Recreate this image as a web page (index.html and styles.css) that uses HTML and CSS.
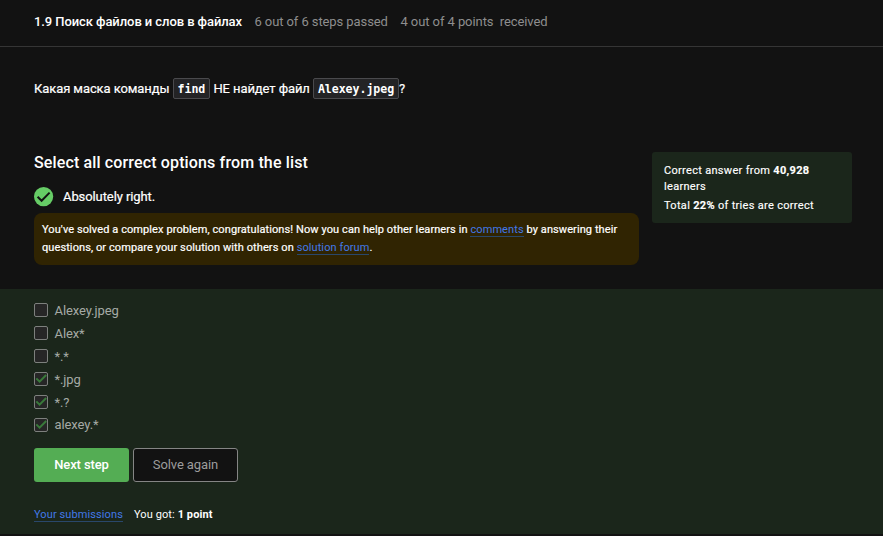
FILE: index.html
```html
<!DOCTYPE html>
<html lang="ru">
<head>
<meta charset="utf-8">
<title>1.9 Поиск файлов и слов в файлах</title>
<link rel="stylesheet" href="styles.css">
</head>
<body>
<header class="topbar"><span class="lesson">1.9 Поиск файлов и слов в файлах</span><span class="steps">6 out of 6 steps passed</span><span class="points">4 out of 4 points &nbsp;received</span></header>
<main>
<p class="question">Какая маска команды <code>find</code> НЕ найдет файл <code>Alexey.jpeg</code>?</p>
<section class="attempt">
<div class="result">
<h2>Select all correct options from the list</h2>
<div class="status"><svg width="20" height="20" viewBox="0 0 20 20"><circle cx="9.6" cy="9.6" r="9.6" fill="#66cc66"/><path d="M3.6 9.8l4 4L15.6 5.6" fill="none" stroke="#121212" stroke-width="2"/></svg><span>Absolutely right.</span></div>
<div class="notice"><span class="line first">You've solved a complex problem, congratulations! Now you can help other learners in <a>comments</a> by answering their</span><span class="line second">questions, or compare your solution with others on <a>solution forum</a>.</span></div>
</div>
<aside class="stats"><p><span class="correct">Correct answer from <b>40,928</b></span><br>learners</p><p><span class="total">Total <b>22%</b> of tries are correct</span></p></aside>
</section>
<section class="quiz">
<ul class="options">
<li><i class="box"></i><span>Alexey.jpeg</span></li>
<li><i class="box"></i><span>Alex*</span></li>
<li><i class="box"></i><span>*.*</span></li>
<li><i class="box"><svg viewBox="0 0 12 12"><path d="M1.3 5.4l3.3 3.3L11.2 2"/></svg></i><span>*.jpg</span></li>
<li><i class="box"><svg viewBox="0 0 12 12"><path d="M1.3 5.4l3.3 3.3L11.2 2"/></svg></i><span>*.?</span></li>
<li><i class="box"><svg viewBox="0 0 12 12"><path d="M1.3 5.4l3.3 3.3L11.2 2"/></svg></i><span>alexey.*</span></li>
</ul>
<div class="actions"><button class="next">Next step</button><button class="again">Solve again</button></div>
<div class="summary"><a>Your submissions</a><span class="got">You got: <b>1 point</b></span></div>
</section>
</main>
</body>
</html>
```
FILE: styles.css
```css
* { box-sizing: border-box; }
body {
  margin: 0;
  height: 536px;
  overflow: hidden;
  background: #121212;
  color: #fff;
  font-family: Roboto, "Open Sans", sans-serif;
  font-size: 13px;
}
p, h2, ul { margin: 0; padding: 0; }
.topbar {
  display: flex;
  align-items: center;
  height: 47px;
  padding: 0 34px 3px;
  border-bottom: 1px solid #353535;
  color: #8e8e8e;
  white-space: nowrap;
}
.lesson { width: 208px; margin-right: 12.5px; color: #fff; font-weight: 500; letter-spacing: -0.08px; }
.steps { width: 133.5px; margin-right: 12.5px; letter-spacing: -0.09px; }
.points { letter-spacing: -0.08px; }
.question {
  height: 105px;
  padding: 31px 34px 0;
  line-height: 21px;
  letter-spacing: -0.09px;
  -webkit-text-stroke: 0.2px;
  white-space: nowrap;
}
code {
  display: inline-block;
  height: 21px;
  padding: 0 4px;
  border: 1px solid #4a4a4d;
  border-radius: 2px;
  background: #232325;
  font: bold 11.6px/21px "DejaVu Sans Mono", monospace;
  letter-spacing: -0.06px;
  -webkit-text-stroke: 0;
  vertical-align: top;
}
.attempt {
  display: flex;
  justify-content: space-between;
  align-items: flex-start;
  height: 137px;
  padding: 0 31px 0 34px;
}
.result { width: 605px; }
h2 { font-size: 16px; font-weight: 500; line-height: 21px; letter-spacing: 0.14px; }
.status {
  display: flex;
  align-items: center;
  gap: 9px;
  height: 20px;
  margin: 13px 0 7px;
  letter-spacing: -0.09px;
  -webkit-text-stroke: 0.2px;
}
.status svg { position: relative; top: 1px; -webkit-text-stroke: 0; }
.notice {
  height: 52px;
  padding: 8px;
  border-radius: 8px;
  background: #302402;
  font-size: 11px;
  line-height: 18px;
  letter-spacing: 0.09px;
  -webkit-text-stroke: 0.2px;
  white-space: nowrap;
}
.line { display: block; }
a { color: #4279e8; border-bottom: 1px solid #29476b; -webkit-text-stroke: 0; }
.stats {
  width: 200px;
  height: 71px;
  padding: 11px 12px;
  border-radius: 3px;
  background: #1b261b;
  font-size: 11px;
  line-height: 16px;
  letter-spacing: 0.31px;
  -webkit-text-stroke: 0.15px;
  white-space: nowrap;
}
.stats p + p { margin-top: 3px; }
.quiz {
  height: 245px;
  padding: 10px 34px 0;
  background: #1b261b;
}
.options { list-style: none; color: #a5aaa5; }
.options li { display: flex; align-items: center; gap: 6.5px; height: 22.9px; letter-spacing: -0.09px; }
.box {
  width: 14px;
  height: 14px;
  border: 1px solid #7d807d;
  border-radius: 2px;
  background: #262626;
}
.box svg { display: block; width: 12px; height: 12px; }
.box path { fill: none; stroke: #39793a; stroke-width: 2; }
.actions { display: flex; gap: 4px; margin-top: 11.6px; }
button {
  height: 34px;
  padding: 0 0 1px;
  border-radius: 3px;
  font: 500 13px Roboto, sans-serif;
}
.next { width: 95px; border: 0; background: #54ad54; color: #fff; letter-spacing: -0.1px; }
.again { width: 105px; border: 1px solid #858585; background: #121212; color: #9c9c9c; font-weight: 400; letter-spacing: -0.1px; }
.summary {
  display: flex;
  gap: 11px;
  margin-top: 26px;
  font-size: 11px;
  line-height: 13px;
  letter-spacing: 0.1px;
}
```
